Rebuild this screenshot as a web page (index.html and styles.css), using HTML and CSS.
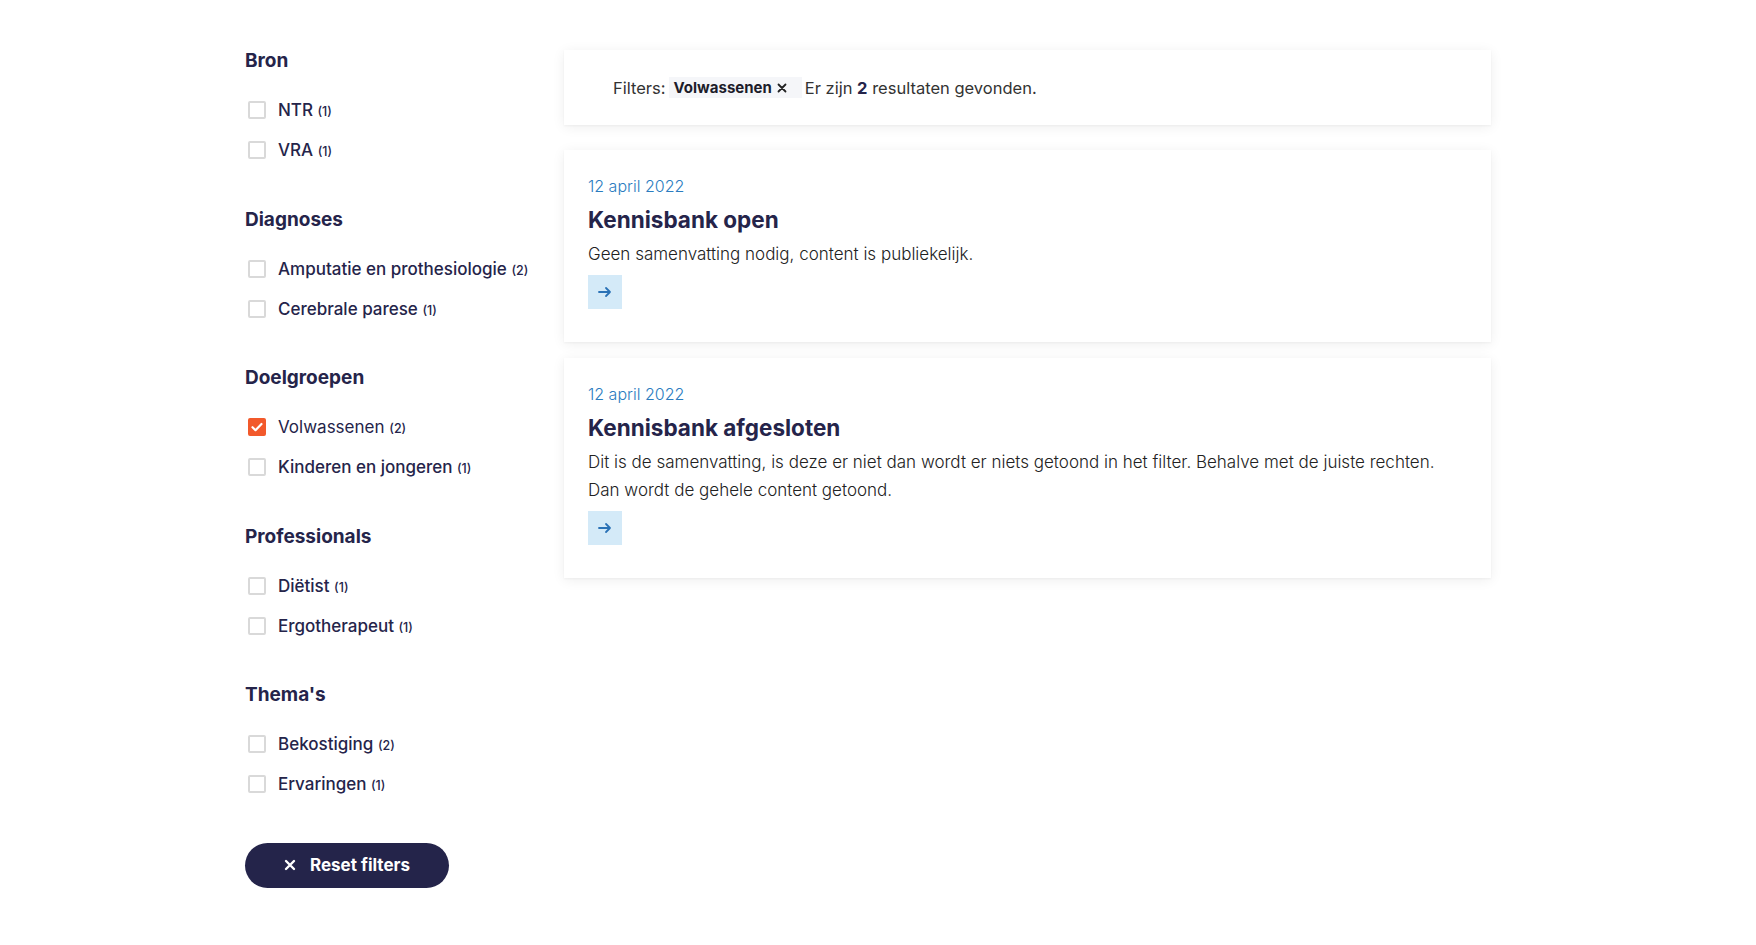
FILE: index.html
```html
<!DOCTYPE html>
<html lang="nl">
<head>
<meta charset="utf-8">
<title>Kennisbank</title>
<link rel="stylesheet" href="styles.css">
</head>
<body>
<div class="page">
  <aside class="sidebar">
    <section class="facet">
      <h3 class="facet-title">Bron</h3>
      <ul class="facet-list">
        <li class="facet-item"><span class="box"></span><span class="label">NTR <small class="count">(1)</small></span></li>
        <li class="facet-item"><span class="box"></span><span class="label">VRA <small class="count">(1)</small></span></li>
      </ul>
    </section>
    <section class="facet">
      <h3 class="facet-title">Diagnoses</h3>
      <ul class="facet-list">
        <li class="facet-item"><span class="box"></span><span class="label">Amputatie en prothesiologie <small class="count">(2)</small></span></li>
        <li class="facet-item"><span class="box"></span><span class="label">Cerebrale parese <small class="count">(1)</small></span></li>
      </ul>
    </section>
    <section class="facet">
      <h3 class="facet-title">Doelgroepen</h3>
      <ul class="facet-list">
        <li class="facet-item is-checked"><span class="box"><svg viewBox="0 0 18 18" width="18" height="18"><path d="M4.5 9.2l3 3 6-6.2" fill="none" stroke="#fff" stroke-width="2.2" stroke-linecap="round" stroke-linejoin="round"/></svg></span><span class="label">Volwassenen <small class="count">(2)</small></span></li>
        <li class="facet-item"><span class="box"></span><span class="label">Kinderen en jongeren <small class="count">(1)</small></span></li>
      </ul>
    </section>
    <section class="facet">
      <h3 class="facet-title">Professionals</h3>
      <ul class="facet-list">
        <li class="facet-item"><span class="box"></span><span class="label">Diëtist <small class="count">(1)</small></span></li>
        <li class="facet-item"><span class="box"></span><span class="label">Ergotherapeut <small class="count">(1)</small></span></li>
      </ul>
    </section>
    <section class="facet">
      <h3 class="facet-title">Thema's</h3>
      <ul class="facet-list">
        <li class="facet-item"><span class="box"></span><span class="label">Bekostiging <small class="count">(2)</small></span></li>
        <li class="facet-item"><span class="box"></span><span class="label">Ervaringen <small class="count">(1)</small></span></li>
      </ul>
    </section>
    <button class="reset-btn" type="button">
      <svg viewBox="0 0 12 12" width="12" height="12"><path d="M2 2l8 8M10 2l-8 8" stroke="#fff" stroke-width="2.4" stroke-linecap="round"/></svg>
      <span>Reset filters</span>
    </button>
  </aside>

  <main class="results">
    <div class="filterbar">
      <span class="filters-label">Filters:</span>
      <span class="chip">Volwassenen <svg viewBox="0 0 10 10" width="10" height="10"><path d="M1.5 1.5l7 7M8.5 1.5l-7 7" stroke="#222" stroke-width="1.8" stroke-linecap="round"/></svg></span>
      <span class="result-count">Er zijn <b>2</b> resultaten gevonden.</span>
    </div>

    <article class="card">
      <div class="card-date">12 april 2022</div>
      <h2 class="card-title">Kennisbank open</h2>
      <p class="card-text">Geen samenvatting nodig, content is publiekelijk.</p>
      <a class="card-link" href="#"><svg viewBox="0 0 16 16" width="16" height="16"><path d="M2 8h11M9 4l4 4-4 4" fill="none" stroke="#2a72b6" stroke-width="1.8" stroke-linecap="round" stroke-linejoin="round"/></svg></a>
    </article>

    <article class="card">
      <div class="card-date">12 april 2022</div>
      <h2 class="card-title">Kennisbank afgesloten</h2>
      <p class="card-text">Dit is de samenvatting, is deze er niet dan wordt er niets getoond in het filter. Behalve met de juiste rechten. Dan wordt de gehele content getoond.</p>
      <a class="card-link" href="#"><svg viewBox="0 0 16 16" width="16" height="16"><path d="M2 8h11M9 4l4 4-4 4" fill="none" stroke="#2a72b6" stroke-width="1.8" stroke-linecap="round" stroke-linejoin="round"/></svg></a>
    </article>
  </main>
</div>
</body>
</html>
```

FILE: styles.css
```css
* { box-sizing: border-box; }

html, body {
  margin: 0;
  padding: 0;
  background: #ffffff;
}

body {
  font-family: "Inter", "Noto Sans", sans-serif;
  color: #25244a;
}

.page {
  display: grid;
  grid-template-columns: 319px 927px;
  width: 1266px;
  margin: 0 auto;
  padding-top: 50px;
  align-items: start;
}

/* Sidebar */
.sidebar {
  display: flex;
  flex-direction: column;
  align-items: flex-start;
}

.facet {
  margin-bottom: 38.5px;
}

.facet-title {
  margin: 0 0 18px;
  font-size: 19px;
  line-height: 22px;
  font-weight: 700;
  color: #25244a;
}

.facet-list {
  list-style: none;
  margin: 0;
  padding: 0;
}

.facet-item {
  display: flex;
  align-items: center;
  height: 40px;
  font-size: 17px;
  font-weight: 500;
  color: #25244a;
}

.box {
  width: 18px;
  height: 18px;
  margin-left: 3px;
  margin-right: 12px;
  border: 2px solid #d9d9d9;
  border-radius: 2px;
  display: flex;
  align-items: center;
  justify-content: center;
  flex: none;
}

.is-checked .box {
  background: #f2592b;
  border-color: #f2592b;
}

.is-checked .box svg {
  flex: none;
}

.is-checked .label {
  font-weight: 400;
}

.count {
  font-size: 12.5px;
  font-weight: 500;
}

.reset-btn {
  margin-top: 0;
  width: 204px;
  height: 45px;
  border: 0;
  border-radius: 23px;
  background: #24244a;
  color: #fff;
  font-family: inherit;
  font-size: 17px;
  font-weight: 700;
  display: flex;
  align-items: center;
  justify-content: center;
  gap: 14px;
  padding: 0 2px 0 2px;
}

/* Results */
.results {
  display: flex;
  flex-direction: column;
}

.filterbar {
  height: 75px;
  padding-left: 49px;
  display: flex;
  align-items: center;
  background: #fff;
  box-shadow: 0 2px 12px rgba(0, 0, 0, 0.07), 0 1px 2px rgba(0, 0, 0, 0.04);
  font-size: 16.5px;
  color: #333;
  margin-bottom: 25px;
}

.chip {
  display: inline-flex;
  align-items: center;
  gap: 5px;
  height: 21px;
  margin-left: 3px;
  padding: 0 15px 0 5px;
  background: #f5f6f9;
  font-size: 15px;
  font-weight: 700;
  color: #1d1d2b;
}

.result-count {
  margin-left: 3px;
}

.result-count b {
  color: #25244a;
}

.card {
  background: #fff;
  box-shadow: 0 2px 12px rgba(0, 0, 0, 0.07), 0 1px 2px rgba(0, 0, 0, 0.04);
  padding: 24px 24px 33px;
  margin-bottom: 16px;
}

.card-date {
  font-size: 16px;
  line-height: 24px;
  font-weight: 300;
  color: #2b7cc0;
}

.card-title {
  margin: 8px 0 0;
  font-size: 22.5px;
  line-height: 28px;
  font-weight: 700;
  color: #25244a;
}

.card-text {
  margin: 6px 0 0;
  font-size: 17px;
  line-height: 28px;
  font-weight: 300;
  color: #222;
}

.card-link {
  margin-top: 7px;
  width: 34px;
  height: 34px;
  background: #d4eaf8;
  display: flex;
  align-items: center;
  justify-content: center;
}
```
